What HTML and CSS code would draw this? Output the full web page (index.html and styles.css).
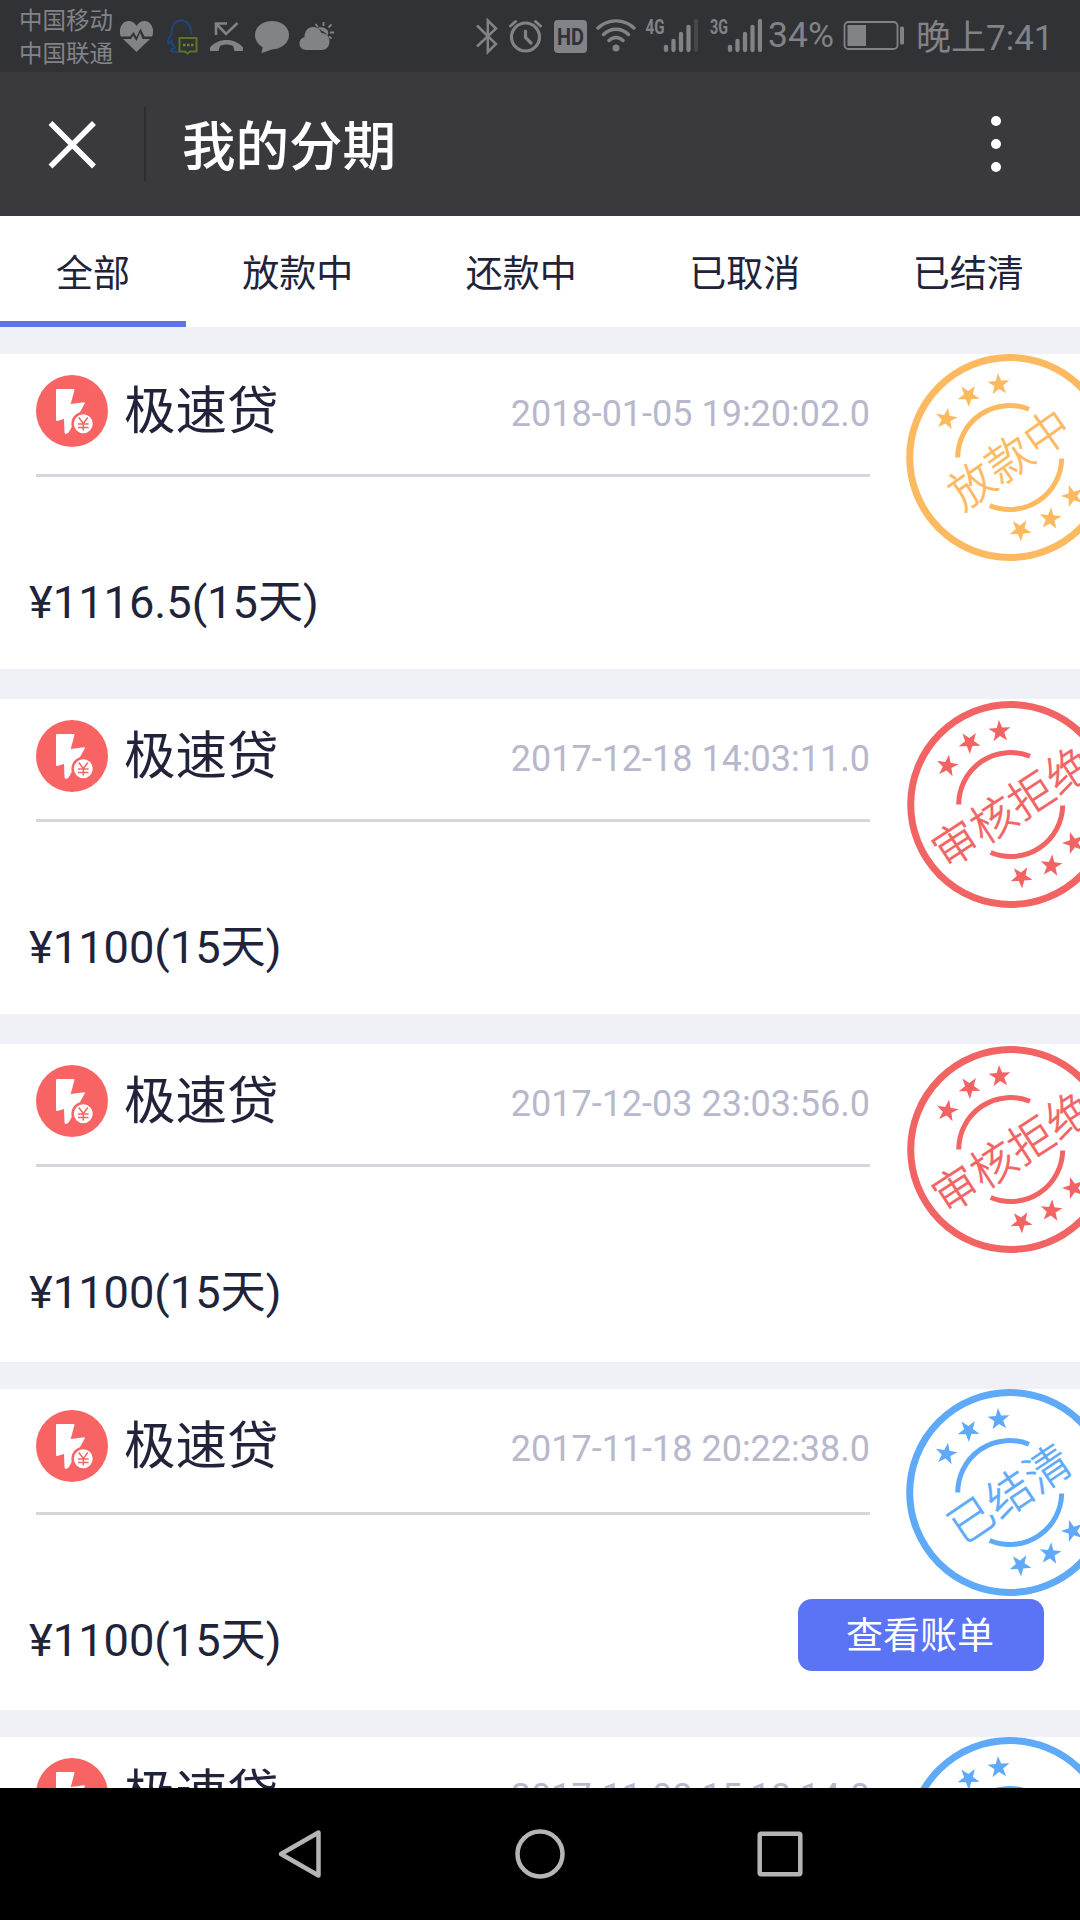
FILE: index.html
```html
<!DOCTYPE html>
<html lang="zh-CN">
<head>
    <meta charset="UTF-8">
    <meta name="viewport" content="width=device-width, initial-scale=1.0">
    <title>我的分期</title>
    <link rel="stylesheet" href="styles.css">
</head>
<body>
    <!-- shared shapes -->
    <svg class="defs" width="0" height="0">
        <symbol id="loan" viewBox="0 0 72 72">
            <circle cx="36" cy="36" r="36" fill="#f86464"/>
            <path d="M21 14H37.5Q38.8 14 38.4 15.3L34.7 29L48 27.2Q49.6 27.2 48.6 28.8L33.5 56Q32 59 30 59Q28.600 59 28.500 57L28 44L21.300 46Q20 46.200 20 45V15Q20 14 21 14Z" fill="#fff"/>
            <circle cx="47.300" cy="48.700" r="10.700" fill="#fff" stroke="#f86464" stroke-width="2.500"/>
            <path d="M42.800 42.500L47.300 48.500L51.800 42.500M47.300 48.500V55.500M42 49H52.600M42 52.500H52.600" fill="none" stroke="#f86464" stroke-width="1.500"/>
        </symbol>
        <symbol id="star" viewBox="-12 -12 24 24">
            <path d="M0 -11.500L2.700 -3.700L10.900 -3.600L4.400 1.400L6.800 9.300L0 4.600L-6.800 9.300L-4.400 1.400L-10.900 -3.600L-2.700 -3.700Z" fill="currentColor"/>
        </symbol>
        <symbol id="ring" viewBox="0 0 208 208">
            <g fill="none" stroke="currentColor">
                <circle cx="103.700" cy="103.500" r="100" stroke-width="7"/>
                <path d="M51.700 103.500A52 52 0 0 1 123 55.200M155.700 104.500A52 52 0 0 1 83.700 151.500" stroke-width="5"/>
            </g>
            <use href="#star" x="-12" y="-12" width="24" height="24" transform="translate(40.300 65) rotate(9)"/>
            <use href="#star" x="-12" y="-12" width="24" height="24" transform="translate(62.500 41.500) rotate(-38)"/>
            <use href="#star" x="-12" y="-12" width="24" height="24" transform="translate(92.700 30.500) rotate(-4)"/>
            <use href="#star" x="-12" y="-12" width="24" height="24" transform="translate(114.300 176) rotate(-40)"/>
            <use href="#star" x="-12" y="-12" width="24" height="24" transform="translate(144.300 164.800) rotate(5)"/>
            <use href="#star" x="-12" y="-12" width="24" height="24" transform="translate(166.500 142) rotate(-18)"/>
        </symbol>
    </svg>

    <div class="statusbar">
        <div class="carrier">中国移动<br>中国联通</div>
        <svg class="st-heart" width="34" height="72" viewBox="120 0 34 72">
            <path d="M136.500 52L123 39H131L133 35.500L136.500 41L140 32.500L142.500 39H150ZM120.800 36.500C118 29 122 21 128.500 21C132 21 135 23 136.500 26C138 23 141 21 144.500 21C151 21 155 29 152.200 36.500H144.500L140.500 28.500L136.500 37L133.500 32L130 36.500Z" fill="currentColor"/>
        </svg>
        <svg class="st-qq" width="32" height="72" viewBox="166 0 32 72">
            <path d="M171.500 35C171 25 175 20.500 181 20.500C187.500 20.500 191.500 26 191.500 35M171.500 35C168.500 38 167 42 168.500 43.500C169.500 43.500 170.500 42 171.500 41C172 44 173 46 174.500 47.500C171 49 170 51.500 173 51.800H179" fill="none" stroke="#1f4678" stroke-width="2"/>
            <path d="M179.500 38H196.500V51.500H190L187.500 53.500L185 51.500H179.500Z" fill="#313236" stroke="#5d7329" stroke-width="2"/>
            <path d="M183 45H185.500M187 45H189.500M191 45H193.500" stroke="#6f8532" stroke-width="2.500"/>
        </svg>
        <svg class="st-call" width="34" height="72" viewBox="210 0 34 72">
            <path d="M216 35V23.500H227M216.500 24L226 34L237.500 23" fill="none" stroke="currentColor" stroke-width="2.600"/>
            <path d="M210 47.500C218 37.500 235 37.500 243 47.500V51H234.500L233 46C229 44 224 44 220 46L218.500 51H210Z" fill="currentColor"/>
        </svg>
        <svg class="st-chat" width="34" height="72" viewBox="255 0 34 72">
            <path d="M272 21C281.500 21 289 27 289 35C289 43 281.500 49 272 49.500C269 50 265 52.500 261.500 53C261 52 263 49.500 262.500 47C258 44.500 255 40 255 35C255 27 262.500 21 272 21Z" fill="currentColor"/>
        </svg>
        <svg class="st-cloud" width="36" height="72" viewBox="299 0 36 72">
            <path d="M306 50C302 50 299.500 47 299.500 43.500C299.500 40 302 37.500 304.500 37.200C304.500 31 308 27 313 27C317.500 27 320 29.500 321.500 33C326.500 33 329.500 37 329.500 41.500C329.500 46.500 326 50 321.500 50Z" fill="currentColor"/>
            <path d="M317 28.500C320 26 326 27.500 328 31C328.500 33 328 35 327.500 35.500C326 33 324 31.500 322 31C321 29.500 319 28.500 317 28.500Z" fill="currentColor"/>
            <path d="M323.500 26V22M318 27L315.500 24M328.500 27.500L331.500 24.500M330 32.500H334M329 36.500L331.500 38.500" stroke="currentColor" stroke-width="1.800"/>
        </svg>

        <svg class="st-bt" width="24" height="72" viewBox="475 0 24 72">
            <path d="M477 25.500L496 44L487.800 52V20.500L496 28.500L477 46.500" fill="none" stroke="currentColor" stroke-width="2.500"/>
        </svg>
        <svg class="st-alarm" width="34" height="72" viewBox="508 0 34 72">
            <g fill="none" stroke="currentColor" stroke-linecap="round">
                <circle cx="525.500" cy="37" r="14" stroke-width="3.200"/>
                <path d="M525.500 31V37.500L531 43" stroke-width="3.200"/>
                <path d="M510.500 26L515.500 21.500M535.500 21.500L540.500 26" stroke-width="3"/>
            </g>
        </svg>
        <svg class="st-hd" width="34" height="72" viewBox="554 0 34 72">
            <rect x="554" y="20" width="33" height="33" rx="4" fill="currentColor"/>
            <text x="570.500" y="44.500" text-anchor="middle" textLength="27" lengthAdjust="spacingAndGlyphs">HD</text>
        </svg>
        <svg class="st-wifi" width="40" height="72" viewBox="596 0 40 72">
            <path d="M598 28C608 18.500 624 18.500 634 28M603.500 34.500C610.500 27.500 621.500 27.500 628.500 34.500M609 40.500C613 36.500 619 36.500 623 40.500" fill="none" stroke="currentColor" stroke-width="3.400" stroke-linecap="round"/>
            <circle cx="616" cy="48" r="3.500" fill="currentColor"/>
        </svg>
        <svg class="st-signal" width="53" height="72" viewBox="645 0 53 72">
            <text x="645.500" y="34" textLength="19" lengthAdjust="spacingAndGlyphs">4G</text>
            <path d="M666 47V50M673.500 41V50M681 34V50M688.500 27V50" stroke="currentColor" stroke-width="4.300" stroke-linecap="round"/>
            <path d="M696 21V50" stroke="#46474b" stroke-width="4" stroke-linecap="round"/>
        </svg>
        <svg class="st-signal st-signal2" width="53" height="72" viewBox="709 0 53 72">
            <text x="710" y="34" textLength="18" lengthAdjust="spacingAndGlyphs">3G</text>
            <path d="M730 47V50M737.500 41V50M745 34V50M752.500 27V50M760 21V50" stroke="currentColor" stroke-width="4.300" stroke-linecap="round"/>
        </svg>
        <span class="percent">34%</span>
        <svg class="st-battery" width="62" height="72" viewBox="843 0 62 72">
            <rect x="844.500" y="22" width="53" height="27" rx="4" fill="none" stroke="currentColor" stroke-width="1.800"/>
            <rect x="847.500" y="25" width="18.500" height="21" fill="currentColor"/>
            <rect x="900" y="26.500" width="4" height="18" rx="1.500" fill="currentColor"/>
        </svg>
        <span class="clock">晚上7:41</span>
    </div>

    <div class="header">
        <svg class="close" width="48" height="49" viewBox="0 0 48 49">
            <path d="M2.500 3L46 46.500M46 3L2.500 46.500" stroke="#fff" stroke-width="5.500"/>
        </svg>
        <h1>我的分期</h1>
        <div class="more"><i></i><i></i><i></i></div>
    </div>

    <div class="tabs">
        <a class="tab active">全部</a>
        <a class="tab">放款中</a>
        <a class="tab">还款中</a>
        <a class="tab">已取消</a>
        <a class="tab">已结清</a>
    </div>

    <div class="list">
        <div class="card">
            <div class="card-head">
                <svg class="loan-icon"><use href="#loan"/></svg>
                <span class="name">极速贷</span>
                <span class="date">2018-01-05 19:20:02.0</span>
            </div>
            <div class="card-body">
                <span class="amount">¥1116.5(15天)</span>
            </div>
            <svg class="stamp orange" viewBox="0 0 208 208">
                <use href="#ring"/>
                <text class="word3" transform="translate(104 105) rotate(-35)" x="0" y="16">放款中</text>
            </svg>
        </div>

        <div class="card">
            <div class="card-head">
                <svg class="loan-icon"><use href="#loan"/></svg>
                <span class="name">极速贷</span>
                <span class="date">2017-12-18 14:03:11.0</span>
            </div>
            <div class="card-body">
                <span class="amount">¥1100(15天)</span>
            </div>
            <svg class="stamp red" viewBox="0 0 208 208">
                <use href="#ring"/>
                <text transform="translate(105.500 106.500) rotate(-33)" x="0" y="16">审核拒绝</text>
            </svg>
        </div>

        <div class="card card-long">
            <div class="card-head">
                <svg class="loan-icon"><use href="#loan"/></svg>
                <span class="name">极速贷</span>
                <span class="date">2017-12-03 23:03:56.0</span>
            </div>
            <div class="card-body">
                <span class="amount">¥1100(15天)</span>
            </div>
            <svg class="stamp red" viewBox="0 0 208 208">
                <use href="#ring"/>
                <text transform="translate(105.500 106.500) rotate(-33)" x="0" y="16">审核拒绝</text>
            </svg>
        </div>

        <div class="card card-bill">
            <div class="card-head">
                <svg class="loan-icon"><use href="#loan"/></svg>
                <span class="name">极速贷</span>
                <span class="date">2017-11-18 20:22:38.0</span>
            </div>
            <div class="card-body">
                <span class="amount">¥1100(15天)</span>
                <button class="bill">查看账单</button>
            </div>
            <svg class="stamp blue" viewBox="0 0 208 208">
                <use href="#ring"/>
                <text class="word3" transform="translate(104 105) rotate(-34)" x="0" y="16">已结清</text>
            </svg>
        </div>

        <div class="card card-bill">
            <div class="card-head">
                <svg class="loan-icon"><use href="#loan"/></svg>
                <span class="name">极速贷</span>
                <span class="date">2017-11-08 15:18:14.0</span>
            </div>
            <svg class="stamp blue" viewBox="0 0 208 208">
                <use href="#ring"/>
            </svg>
        </div>
    </div>

    <div class="navbar">
        <svg width="50" height="50" viewBox="0 0 50 50"><path d="M43.500 3.500V46.500L6 25Z"/></svg>
        <svg width="50" height="50" viewBox="0 0 50 50"><circle cx="25" cy="25" r="22.500"/></svg>
        <svg width="50" height="50" viewBox="0 0 50 50"><rect x="4.700" y="4.700" width="40.600" height="40.600" rx="1.500"/></svg>
    </div>
</body>
</html>
```
FILE: styles.css
```css
* {
    box-sizing: border-box;
}

body {
    margin: 0;
    width: 1080px;
    height: 1920px;
    display: flex;
    flex-direction: column;
    overflow: hidden;
    background: #f0f1f6;
    color: #20233a;
    font-family: Roboto, "Noto Sans CJK SC", sans-serif;
}

.defs {
    position: absolute;
}

/* status bar */
.statusbar {
    height: 72px;
    flex: none;
    display: flex;
    background: #313236;
    color: #828386;
    white-space: nowrap;
}

.carrier {
    width: 101px;
    padding: 5px 0 0 19px;
    font-size: 23.5px;
    line-height: 33px;
}

.statusbar svg {
    flex: none;
}

.st-heart { margin-left: 19px; }
.st-qq { margin-left: 12px; }
.st-call { margin-left: 12px; }
.st-chat { margin-left: 11px; }
.st-cloud { margin-left: 10px; }
.st-bt { margin-left: 140px; }
.st-alarm { margin-left: 9px; }
.st-hd { margin-left: 12px; }
.st-wifi { margin-left: 8px; }
.st-signal { margin-left: 9px; }
.st-signal2 { margin-left: 11px; }

.st-hd text {
    font-size: 23px;
    font-weight: bold;
    fill: #313236;
}

.st-signal text {
    font-size: 20px;
    font-weight: bold;
    fill: currentColor;
}

.percent {
    width: 75px;
    margin-left: 6px;
    font-size: 35.5px;
    line-height: 71px;
}

.clock {
    margin-left: 11px;
    font-size: 35px;
    line-height: 77px;
}

/* title bar */
.header {
    height: 144px;
    flex: none;
    display: flex;
    align-items: center;
    background: #3a3a3e;
    color: #fff;
}

.close {
    margin-left: 48px;
}

.header h1 {
    height: 74px;
    margin: 0 auto 0 48px;
    padding-left: 36px;
    border-left: 2px solid #2e2e32;
    font-size: 53.5px;
    font-weight: 500;
    line-height: 82px;
}

.more {
    display: flex;
    flex-direction: column;
    gap: 13px;
    margin-right: 79px;
}

.more i {
    width: 10px;
    height: 10px;
    border-radius: 50%;
    background: #fff;
}

/* tabs */
.tabs {
    height: 111px;
    flex: none;
    display: flex;
    background: #fff;
}

.tab {
    flex: 1;
    text-align: center;
    font-size: 37px;
    line-height: 118px;
}

.tab.active {
    flex: none;
    width: 186px;
    border-bottom: 6px solid #5f72e6;
}

/* loan list */
.list {
    flex: 1;
    min-height: 0;
    padding-top: 27px;
    overflow: hidden;
}

.card {
    position: relative;
    height: 315px;
    margin-bottom: 30px;
    background: #fff;
    overflow: hidden;
}

.card-long {
    height: 318px;
    margin-bottom: 27px;
}

.card-bill {
    height: 321px;
    margin-bottom: 27px;
}

.card-head {
    display: flex;
    width: 834px;
    height: 123px;
    margin-left: 36px;
    border-bottom: 3px solid #d5d6dc;
}

.card-bill .card-head {
    height: 126px;
}

.loan-icon {
    width: 72px;
    height: 72px;
    margin-top: 21px;
}

.name {
    margin-left: 16px;
    font-size: 51.5px;
    line-height: 116px;
}

.date {
    margin-left: auto;
    color: #b7b8cc;
    font-size: 36px;
    line-height: 121px;
}

.card-body {
    display: flex;
    justify-content: space-between;
    align-items: flex-start;
    padding: 84px 36px 0 29px;
}

.amount {
    padding-top: 10px;
    font-size: 45.2px;
    line-height: 64px;
}

.bill {
    width: 246px;
    height: 72px;
    padding: 4px 2px 0 0;
    border: none;
    border-radius: 14px;
    background: #5b73f5;
    color: #fff;
    font-family: inherit;
    font-size: 37px;
    line-height: 68px;
}

/* status stamp, cut off by the right edge */
.stamp {
    position: absolute;
    top: 0;
    left: 906px;
    width: 208px;
    height: 208px;
}

.stamp text {
    font-size: 45px;
    font-weight: 300;
    text-anchor: middle;
    fill: currentColor;
    stroke: currentColor;
    stroke-width: 0.6px;
}

.stamp .word3 {
    letter-spacing: 1px;
}

.orange { color: #fcb95f; }
.red { color: #f26363; top: 2px; left: 907px; }
.blue { color: #5eaaf8; }

/* system keys */
.navbar {
    height: 132px;
    flex: none;
    display: flex;
    justify-content: center;
    align-items: center;
    gap: 190px;
    background: #000;
}

.navbar svg {
    fill: none;
    stroke: #b5b5b5;
    stroke-width: 4.5;
    stroke-linejoin: round;
}
```
